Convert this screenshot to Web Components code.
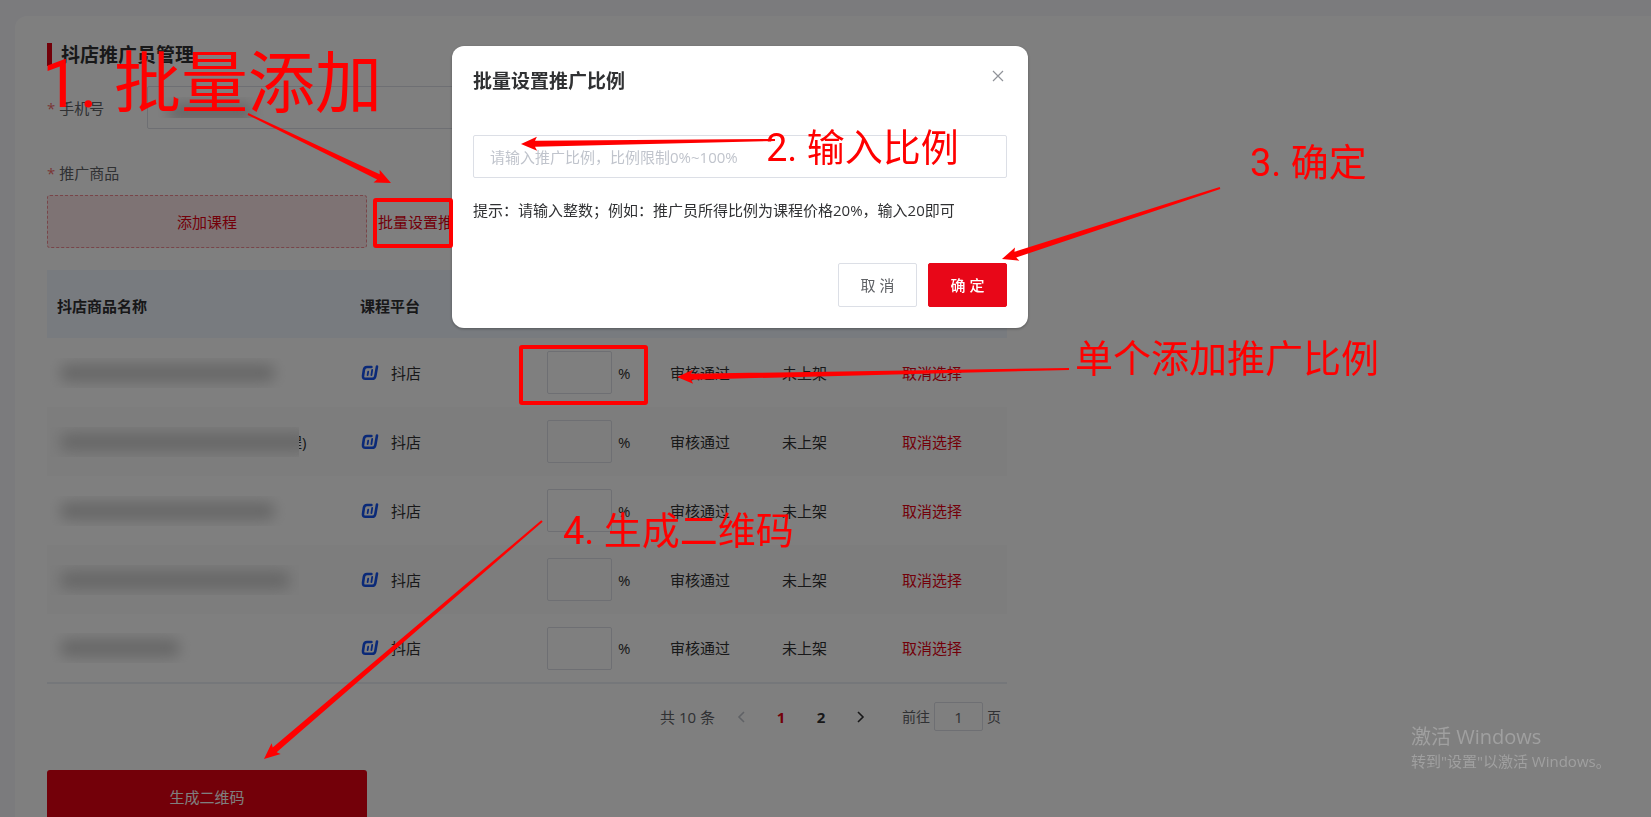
<!DOCTYPE html>
<html lang="zh-CN">
<head>
<meta charset="utf-8">
<title>抖店推广员管理</title>
<style>
  html, body {
    margin: 0;
    height: 100%;
  }
  body {
    background: #f6f6fb;
    color: #303133;
    font-family: "Open Sans", "Noto Sans CJK SC", sans-serif;
    font-size: 15px;
    line-height: 22px;
    overflow: hidden;
    --primary: #e60012;
    --border: #dcdfe6;
  }
</style>
</head>
<body>

<promoter-page></promoter-page>
<ratio-dialog heading="批量设置推广比例">
  提示：请输入整数；例如：推广员所得比例为课程价格20%，输入20即可
</ratio-dialog>
<windows-mark></windows-mark>
<step-notes></step-notes>

<script>
class BaseElement extends HTMLElement {
  constructor() {
    super();
    this.attachShadow({ mode: 'open' });
  }

  connectedCallback() {
    this.shadowRoot.innerHTML = this.render();
  }
}

// page heading with the red bar in front
class SectionTitle extends BaseElement {
  render() {
    return `
      <style>
        :host { display: block; }
        h1 {
          display: flex;
          align-items: center;
          gap: 9px;
          margin: 0;
          height: 23px;
          font-size: 19px;
          line-height: 22px;
        }
        h1::before {
          content: "";
          width: 5px;
          height: 23px;
          background: var(--primary);
        }
      </style>
      <h1><slot></slot></h1>
    `;
  }
}

// blurred area over private data, length is the width of the smudge
class MaskedText extends BaseElement {
  render() {
    const length = this.getAttribute('length');
    return `
      <style>
        :host {
          display: block;
          flex: none;
          overflow: hidden;
          background: inherit;
        }
        div {
          width: ${length}px;
          height: 18px;
          margin: 6px 0 6px 10px;
          border-radius: 8px;
          background: #cfcfcf;
          filter: blur(7px);
        }
      </style>
      <div></div>
    `;
  }
}

class DoudianIcon extends BaseElement {
  render() {
    return `
      <style>
        :host { display: block; width: 20px; height: 18px; }
        svg { display: block; }
      </style>
      <svg width="20" height="18" viewBox="0 0 20 18" fill="none" stroke="#1453f0" stroke-linecap="round" stroke-linejoin="round">
        <path stroke-width="2.6" d="M11.4 3H7Q4.3 3 3.9 5.8L3 12Q2.7 14.8 5.4 14.8H12Q14.8 14.8 15.3 12.2L17 2.6"/>
        <path stroke-width="1.8" d="M8.2 7.6L7.6 11.2M12.2 6L11.4 11.2"/>
      </svg>
    `;
  }
}

class CourseTable extends BaseElement {
  constructor() {
    super();
    this.rows = [
      { length: 215 },
      { length: 250, rest: '程)' },
      { length: 215 },
      { length: 230 },
      { length: 120 },
    ];
  }

  renderRow(row) {
    return `
      <tr>
        <td class="name">
          <div class="cell">
            <masked-text length="${row.length}"></masked-text>
            ${row.rest ? `<span class="rest">${row.rest}</span>` : ''}
          </div>
        </td>
        <td><div class="cell platform"><doudian-icon></doudian-icon>抖店</div></td>
        <td><div class="cell ratio"><input type="text" aria-label="推广比例">%</div></td>
        <td>审核通过</td>
        <td>未上架</td>
        <td><a href="#">取消选择</a></td>
      </tr>
    `;
  }

  render() {
    return `
      <style>
        :host { display: block; max-width: 960px; }
        table {
          width: 100%;
          table-layout: fixed;
          border-collapse: separate;
          border-spacing: 0;
          color: #303133;
        }
        th, td {
          box-sizing: border-box;
          padding: 0 10px;
          text-align: left;
        }
        th { height: 68px; padding-top: 4px; background: #f0f7ff; }
        td { height: 69px; }
        tbody tr { background: #fff; }
        tbody tr:nth-child(even) { background: #fafafa; }
        tbody tr:last-child td { height: 70px; border-bottom: 2px solid #ebeef5; }
        .cell { display: flex; align-items: center; background: inherit; }
        .name { padding-left: 3px; background: inherit; }
        masked-text { width: 249px; z-index: 1; }
        .rest { margin-left: -12px; }
        .platform { gap: 11px; }
        .ratio { gap: 6px; }
        input {
          box-sizing: border-box;
          width: 65px;
          height: 43px;
          border: 1px solid var(--border);
          border-radius: 2px;
          background: transparent;
        }
        a { color: var(--primary); text-decoration: none; }
      </style>
      <table>
        <colgroup>
          <col style="width: 303px"><col style="width: 187px"><col style="width: 123px">
          <col style="width: 112px"><col style="width: 120px"><col>
        </colgroup>
        <thead>
          <tr><th>抖店商品名称</th><th>课程平台</th><th></th><th></th><th></th><th></th></tr>
        </thead>
        <tbody>${this.rows.map(this.renderRow).join('')}</tbody>
      </table>
    `;
  }
}

class PagePager extends BaseElement {
  render() {
    return `
      <style>
        :host { display: block; max-width: 960px; }
        nav {
          display: flex;
          align-items: center;
          justify-content: flex-end;
          height: 29px;
          padding-right: 6px;
          color: #606266;
        }
        button {
          display: flex;
          align-items: center;
          justify-content: center;
          width: 40px;
          height: 29px;
          padding: 0;
          border: 0;
          background: none;
          color: #303133;
          font: inherit;
          font-weight: bold;
        }
        button.on { color: var(--primary); }
        button:disabled { color: #c0c4cc; }
        .total { margin-right: 6px; }
        label {
          display: flex;
          align-items: center;
          gap: 4px;
          margin-left: 21px;
          font-size: 14px;
        }
        input {
          box-sizing: border-box;
          width: 49px;
          height: 29px;
          border: 1px solid var(--border);
          border-radius: 2px;
          background: transparent;
          color: #606266;
          font: inherit;
          font-size: 15px;
          text-align: center;
        }
      </style>
      <nav>
        <span class="total">共 10 条</span>
        <button disabled aria-label="上一页">
          <svg width="8" height="12" fill="none" stroke="currentColor" stroke-width="1.6"><path d="M7 1L2 6L7 11"/></svg>
        </button>
        <button class="on">1</button>
        <button>2</button>
        <button aria-label="下一页">
          <svg width="8" height="12" fill="none" stroke="currentColor" stroke-width="1.6"><path d="M1 1L6 6L1 11"/></svg>
        </button>
        <label>前往<input type="text" value="1">页</label>
      </nav>
    `;
  }
}

class PromoterPage extends BaseElement {
  render() {
    return `
      <style>
        :host {
          display: block;
          isolation: isolate;
          padding: 16px 0 0 15px;
        }
        main {
          box-sizing: border-box;
          min-height: 100vh;
          padding: 27px 32px;
          border-radius: 12px 0 0 0;
          background: #fff;
        }
        .field {
          display: flex;
          align-items: center;
          margin-top: 20px;
          position: relative;
        }
        .label { color: #606266; }
        .label::before {
          content: "*";
          margin-right: 4px;
          color: #f56c6c;
        }
        .field .label { width: 100px; }
        .field input {
          box-sizing: border-box;
          width: 640px;
          height: 43px;
          border: 1px solid var(--border);
          border-radius: 2px;
        }
        .field masked-text {
          position: absolute;
          left: 111px;
          width: 108px;
          height: 21px;
        }
        .goods { margin-top: 33px; }
        .actions {
          display: flex;
          gap: 11px;
          margin: 11px 0 22px;
        }
        button {
          box-sizing: border-box;
          height: 53px;
          padding: 0;
          border: 0;
          border-radius: 3px;
          background: none;
          color: var(--primary);
          font: inherit;
        }
        .add, .create { width: 320px; }
        .add { border: 1px dashed #f08a92; background: #fde6e8; }
        .create { background: var(--primary); color: #fff; }
        page-pager { margin: 18px 0 39px; }
      </style>
      <main>
        <section-title>抖店推广员管理</section-title>
        <div class="field">
          <label class="label" for="phone">手机号</label>
          <input id="phone" type="text">
          <masked-text length="85"></masked-text>
        </div>
        <div class="goods label">推广商品</div>
        <div class="actions">
          <button class="add">添加课程</button>
          <button>批量设置推广比例</button>
        </div>
        <course-table></course-table>
        <page-pager></page-pager>
        <button class="create">生成二维码</button>
      </main>
    `;
  }
}

class RatioDialog extends BaseElement {
  render() {
    return `
      <style>
        :host {
          display: block;
          position: fixed;
          inset: 0;
          background: rgba(0, 0, 0, 0.5);
        }
        section {
          box-sizing: border-box;
          width: 576px;
          margin: 46px 0 0 452px;
          padding: 21px;
          border-radius: 12px;
          background: #fff;
          box-shadow: 0 1px 3px rgba(0, 0, 0, 0.3);
        }
        header {
          display: flex;
          justify-content: space-between;
          align-items: flex-start;
        }
        h2 { margin: 0; font-size: 19px; line-height: 28px; }
        button {
          box-sizing: border-box;
          padding: 0;
          font: inherit;
        }
        .close {
          display: flex;
          padding: 3px 3px 0;
          border: 0;
          background: none;
          color: #909399;
        }
        input {
          box-sizing: border-box;
          display: block;
          width: 100%;
          height: 43px;
          margin: 40px 0 21px;
          padding: 0 16px;
          border: 1px solid var(--border);
          border-radius: 2px;
          font: inherit;
        }
        input::placeholder { color: #c0c4cc; }
        p { margin: 0; white-space: nowrap; }
        footer {
          display: flex;
          justify-content: flex-end;
          gap: 11px;
          margin-top: 42px;
        }
        footer button {
          width: 79px;
          height: 44px;
          border: 1px solid var(--border);
          border-radius: 2px;
          background: #fff;
          color: #606266;
        }
        footer .ok {
          border-color: #e80718;
          background: #e80718;
          color: #fff;
          font-weight: 500;
        }
      </style>
      <section role="dialog">
        <header>
          <h2>${this.getAttribute('heading')}</h2>
          <button class="close" aria-label="关闭">
            <svg width="12" height="12" fill="none" stroke="currentColor" stroke-width="1.2"><path d="M1 1L11 11M11 1L1 11"/></svg>
          </button>
        </header>
        <input type="text" aria-label="推广比例" placeholder="请输入推广比例，比例限制0%~100%">
        <p><slot></slot></p>
        <footer>
          <button>取 消</button>
          <button class="ok">确 定</button>
        </footer>
      </section>
    `;
  }
}

class WindowsMark extends BaseElement {
  render() {
    return `
      <style>
        :host {
          position: fixed;
          right: 44px;
          bottom: 45px;
          width: 196px;
          color: #a0a0a0;
          white-space: nowrap;
        }
        div { font-size: 20px; line-height: 26px; }
        small { display: block; font-size: 15px; line-height: 22px; }
      </style>
      <div>激活 Windows</div>
      <small>转到"设置"以激活 Windows。</small>
    `;
  }
}

// red hand notes on top of everything: labels, frames and tapered arrows
class StepNotes extends BaseElement {
  constructor() {
    super();
    this.labels = [
      { x: 42, y: 84, text: '1. 批量添加', big: true },
      { x: 766, y: 148, text: '2. 输入比例' },
      { x: 1250, y: 163, text: '3. 确定' },
      { x: 1075, y: 359, text: '单个添加推广比例' },
      { x: 563, y: 531, text: '4. 生成二维码' },
    ];
    this.frames = [
      { x: 375, y: 200, w: 76, h: 46 },
      { x: 521, y: 347, w: 125, h: 56 },
    ];
    this.arrows = [
      [248, 114, 391, 183],
      [775, 140, 521, 144],
      [1220, 188, 1002, 259],
      [1069, 369, 677, 377],
      [542, 521, 264, 759],
    ];
  }

  arrowPoints([x1, y1, x2, y2]) {
    const len = Math.hypot(x2 - x1, y2 - y1);
    const ux = (x2 - x1) / len;
    const uy = (y2 - y1) / len;
    // back = distance from the tip, side = distance from the axis
    const at = (back, side) =>
      `${(x2 - ux * back - uy * side).toFixed(1)},${(y2 - uy * back + ux * side).toFixed(1)}`;
    return [at(0, 0), at(16, 7), at(14, 3), at(len, 1), at(len, -1), at(14, -3), at(16, -7)].join(' ');
  }

  render() {
    return `
      <style>
        :host {
          display: block;
          position: fixed;
          inset: 0;
          overflow: hidden;
          color: #f00;
          font-family: Roboto, "Noto Sans CJK SC", sans-serif;
          pointer-events: none;
        }
        svg { display: block; width: 100%; height: 100%; }
        span {
          position: absolute;
          font-size: 38px;
          line-height: 40px;
          margin-top: -20px;
          white-space: nowrap;
        }
        .big { font-size: 67px; line-height: 70px; margin-top: -35px; }
      </style>
      <svg>
        ${this.frames.map(f => `<rect x="${f.x}" y="${f.y}" width="${f.w}" height="${f.h}" rx="1" fill="none" stroke="#f00" stroke-width="4"/>`).join('')}
        ${this.arrows.map(a => `<polygon fill="#f00" points="${this.arrowPoints(a)}"/>`).join('')}
      </svg>
      ${this.labels.map(l => `<span class="${l.big ? 'big' : ''}" style="left: ${l.x}px; top: ${l.y}px">${l.text}</span>`).join('')}
    `;
  }
}

customElements.define('section-title', SectionTitle);
customElements.define('masked-text', MaskedText);
customElements.define('doudian-icon', DoudianIcon);
customElements.define('course-table', CourseTable);
customElements.define('page-pager', PagePager);
customElements.define('promoter-page', PromoterPage);
customElements.define('ratio-dialog', RatioDialog);
customElements.define('windows-mark', WindowsMark);
customElements.define('step-notes', StepNotes);
</script>
</body>
</html>
